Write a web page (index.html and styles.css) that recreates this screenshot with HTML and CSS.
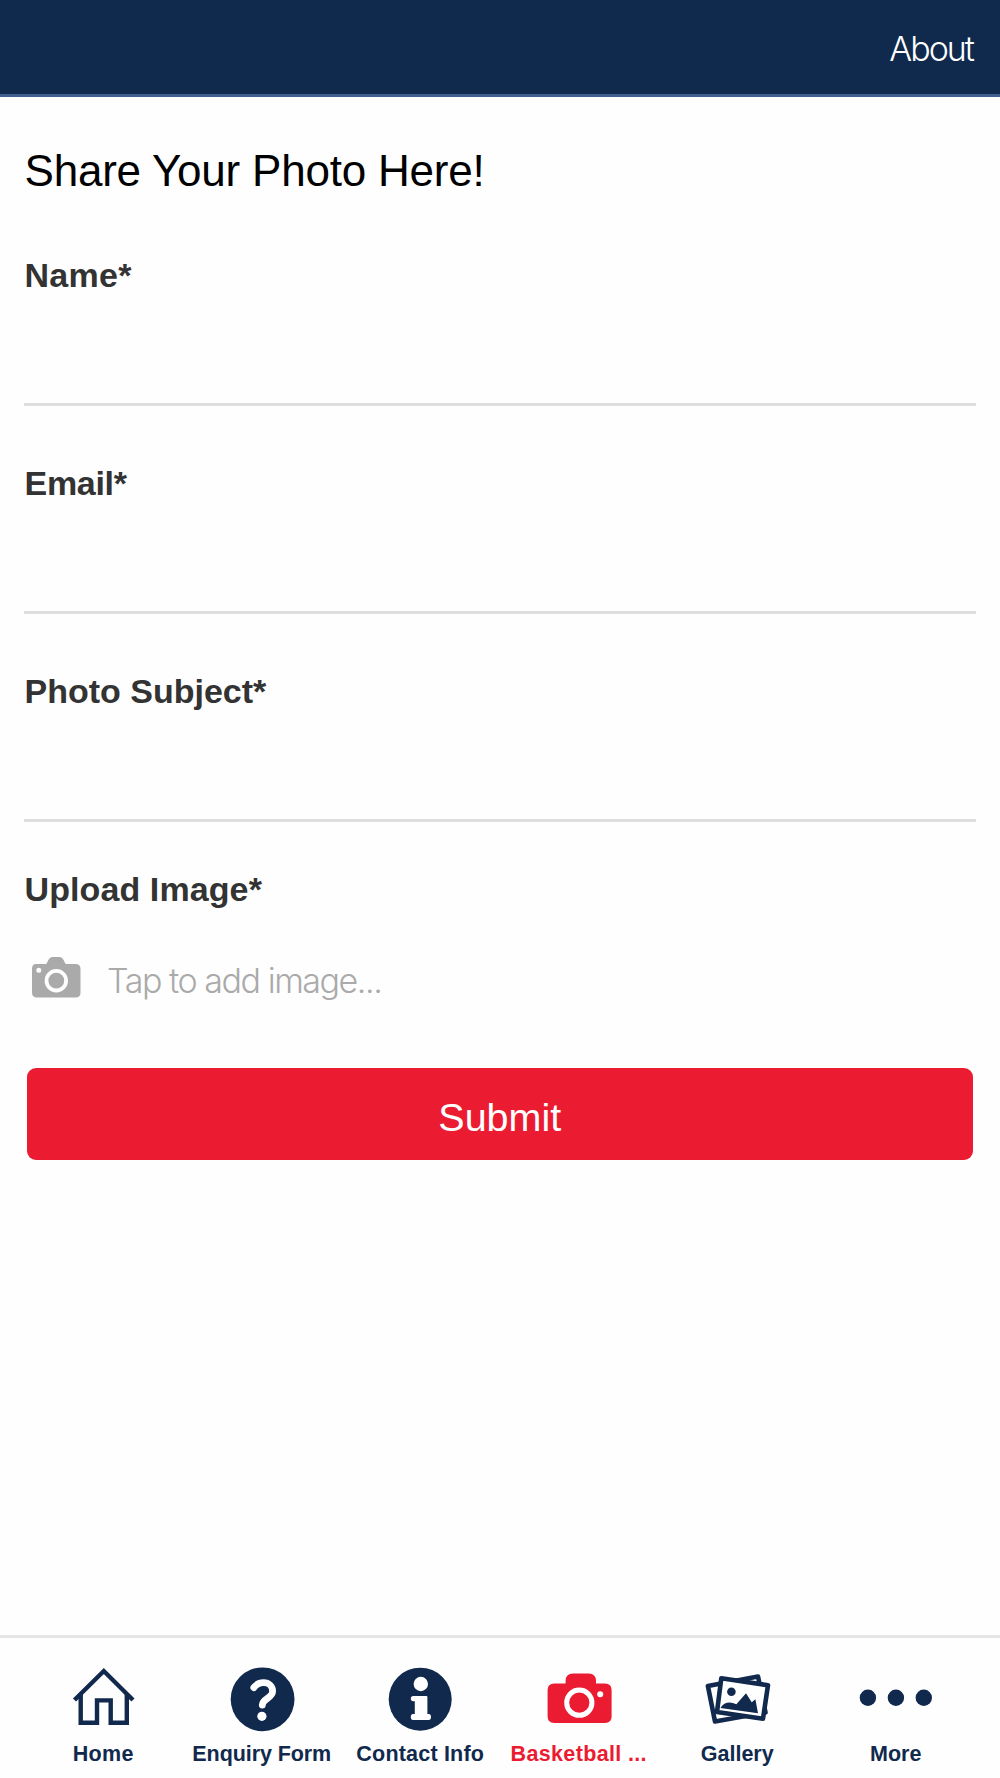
FILE: index.html
```html
<!DOCTYPE html>
<html lang="en">
<head>
<meta charset="utf-8">
<title>Share Your Photo</title>
<link rel="stylesheet" href="styles.css">
</head>
<body>
<header class="topbar"><a class="about"><span>About</span></a></header>
<main class="form">
  <h1 class="title"><span>Share Your Photo Here!</span></h1>
  <label class="field name"><span>Name*</span></label>
  <label class="field email"><span>Email*</span></label>
  <label class="field"><span>Photo Subject*</span></label>
  <div class="upload-label"><span>Upload Image*</span></div>
  <div class="attach">
    <svg class="attach-icon" width="50" height="42" viewBox="0 0 50 42">
      <path fill="#aaa" d="M5 8H14.500C17 8 16.500 1 22 1H28C33.500 1 33 8 35.500 8H44.500Q49.500 8 49.500 13V36.500Q49.500 41.500 44.500 41.500H6Q1 41.500 1 36.500V13Q1 8 5 8Z"/>
      <circle cx="25.300" cy="24.700" r="9.800" fill="none" stroke="#fff" stroke-width="3.800"/>
      <circle cx="7.800" cy="14.300" r="2.500" fill="#fff"/>
    </svg>
    <span class="hint">Tap to add image...</span>
  </div>
  <button class="submit"><span>Submit</span></button>
</main>
<nav class="tabs">
  <a class="tab home">
    <svg width="80" height="70" viewBox="0 0 80 70" fill="none" stroke="currentColor" stroke-width="4.400">
      <path d="M17.700 29V57.800H34V35.400H47.700V57.800H63.800V29"/>
      <path d="M11.500 35L40.800 6L70 35"/>
    </svg><span>Home</span></a>
  <a class="tab enquiry">
    <svg width="80" height="70" viewBox="0 0 80 70">
      <circle cx="40.600" cy="34.300" r="31.900" fill="currentColor"/>
      <path d="M31.800 22.600C35 18.300 38 17.700 41.500 17.700C47 17.700 50.600 21.300 50.600 26.300C50.600 33.300 40.600 33.300 40.300 40" fill="none" stroke="#fff" stroke-width="6.800" stroke-linecap="round"/>
      <circle cx="39.900" cy="51.300" r="4.600" fill="#fff"/>
    </svg><span>Enquiry Form</span></a>
  <a class="tab contact">
    <svg width="80" height="70" viewBox="0 0 80 70">
      <circle cx="40.200" cy="34.200" r="31.500" fill="currentColor"/>
      <circle cx="40.800" cy="19" r="7.200" fill="#fff"/>
      <path fill="#fff" d="M33.300 31H46.400Q47.400 31 47.400 32V49H48.800Q51 49 51 52Q51 54.900 48.800 54.900H33Q30.800 54.900 30.800 52Q30.800 49 33 49H34.800V36.300H33.300Q30.800 36.300 30.800 33.600Q30.800 31 33.300 31Z"/>
    </svg><span>Contact Info</span></a>
  <a class="tab photos active">
    <svg width="80" height="70" viewBox="0 0 80 70">
      <path fill="currentColor" d="M15.200 18.500H26.600V16Q26.600 8.500 34 8.500H49.500Q57 8.500 57 16V18.500H66Q72.600 18.500 72.600 25V51.500Q72.600 58 66 58H15.200Q8.600 58 8.600 51.500V25Q8.600 18.500 15.200 18.500Z"/>
      <circle cx="40.300" cy="37.700" r="12.600" fill="none" stroke="#fff" stroke-width="5"/>
      <circle cx="61.200" cy="29.300" r="3" fill="#fff"/>
    </svg><span>Basketball ...</span></a>
  <a class="tab">
    <svg width="80" height="70" viewBox="0 0 80 70" stroke="currentColor" stroke-linejoin="round">
      <path fill="#fff" stroke-width="4.600" d="M10.900 21L61 11.500L68.500 47.500L18 56.500Z"/>
      <path fill="#fff" stroke-width="4.600" d="M24.300 13.300L71 20.200L66 53.700L20 47Z"/>
      <circle cx="34.400" cy="26.700" r="4.300" fill="currentColor" stroke="none"/>
      <path fill="currentColor" stroke="none" d="M23.400 43Q29 34.500 39.400 39.300L49 28.300L54.700 37.300L58.400 34.300L61 48.300Z"/>
    </svg><span>Gallery</span></a>
  <a class="tab">
    <svg width="80" height="70" viewBox="0 0 80 70" fill="currentColor">
      <circle cx="11.900" cy="32.700" r="8.200"/><circle cx="39.900" cy="32.700" r="8.200"/><circle cx="67.800" cy="32.700" r="8.200"/>
    </svg><span>More</span></a>
</nav>
</body>
</html>
```
FILE: styles.css
```css
* { box-sizing: border-box; }
body {
  margin: 0;
  height: 1778px;
  display: flex;
  flex-direction: column;
  background: #fefefe;
  font-family: "Liberation Sans", Arial, sans-serif;
}
.topbar {
  height: 97px;
  flex: none;
  display: flex;
  justify-content: flex-end;
  padding: 28px 27px 0 0;
  background: #0f2a4d;
  border-bottom: 3px solid #3f5f8f;
}
.about {
  font: 300 34px/42px Inter, sans-serif;
  letter-spacing: -2px;
  color: #fff;
}
.form {
  flex: 1;
  display: flex;
  flex-direction: column;
  padding: 49px 24px 0;
}
.title {
  margin: 0 0 59px;
  padding-left: 0.500px;
  font-size: 44px;
  font-weight: 400;
  line-height: 50px;
  letter-spacing: -0.220px;
  color: #000;
}
.field, .upload-label {
  padding-left: 0.500px;
  font-size: 34px;
  font-weight: 700;
  line-height: 40px;
  color: #333;
}
.field {
  height: 151px;
  margin-bottom: 57px;
  border-bottom: 3px solid #dedede;
}
.name { letter-spacing: 0.300px; }
.email { letter-spacing: -0.300px; }
.upload-label {
  margin-top: -10px;
  letter-spacing: 0.100px;
}
.attach {
  display: flex;
  margin-top: 47px;
  padding-left: 6.500px;
}
.hint {
  margin: 4px 0 0 26.500px;
  font: 300 34px/42px Inter, sans-serif;
  letter-spacing: -1.450px;
  color: #aaa;
}
.attach-icon { flex: none; }
.submit {
  height: 92px;
  margin: 66px 3px 0 2.500px;
  padding: 5px 0 0;
  border: 0;
  border-radius: 9px;
  background: #eb1c31;
  color: #fff;
  font: 400 39.500px/44px "Liberation Sans", Arial, sans-serif;
}
.tabs {
  height: 143px;
  flex: none;
  display: grid;
  grid-template-columns: repeat(6, 158.500px);
  padding: 27px 0 0 24px;
  border-top: 3px solid #e6e6e6;
}
.tab {
  display: flex;
  flex-direction: column;
  align-items: center;
  color: #10294d;
  font-size: 21.500px;
  font-weight: 700;
  line-height: 26px;
  white-space: nowrap;
}
.tab span { margin-top: 6px; }
.home { letter-spacing: 0.350px; }
.enquiry { letter-spacing: -0.080px; }
.contact { letter-spacing: 0.200px; }
.photos { letter-spacing: 0.350px; }
.tab.active { color: #eb1c31; }
```
